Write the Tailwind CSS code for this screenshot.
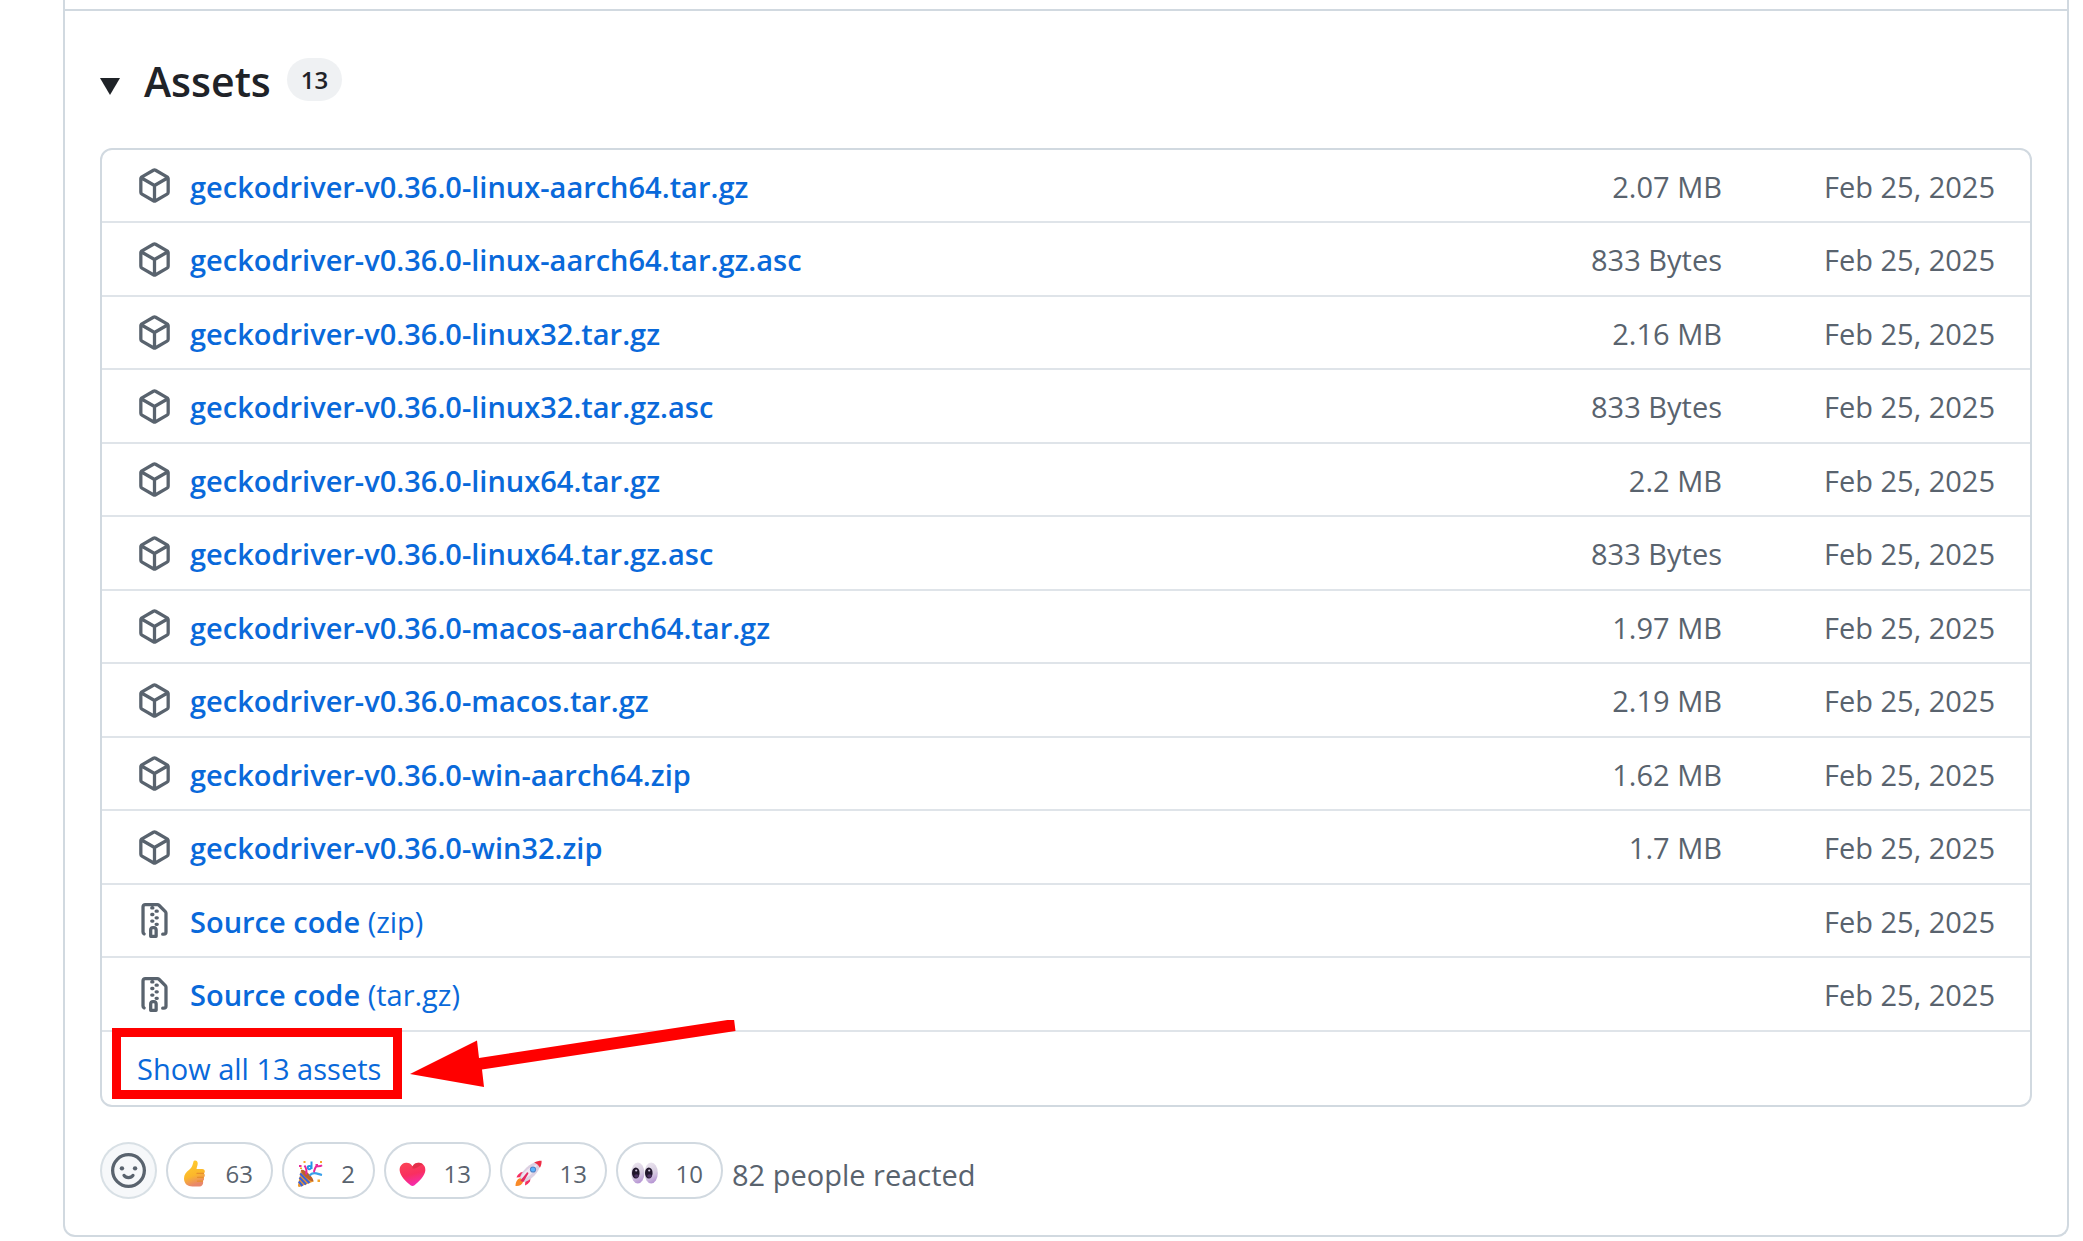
<!DOCTYPE html>
<html lang="en">
  <head>
    <meta charset="UTF-8" />
    <meta name="viewport" content="width=device-width, initial-scale=1.0" />
    <script src="https://cdn.jsdelivr.net/npm/@tailwindcss/browser@4"></script>
    <title>Release v0.36.0 assets</title>
  </head>
  <body class="bg-white font-['Segoe_UI','Open_Sans',sans-serif] text-[#1f2328]">
    <!-- icon sprite -->
    <svg class="hidden" xmlns="http://www.w3.org/2000/svg">
      <symbol id="icon-package" viewBox="0 0 16 16">
        <path d="m8.878.392 5.25 3.045c.54.314.872.89.872 1.514v6.098a1.75 1.75 0 0 1-.872 1.514l-5.25 3.045a1.75 1.75 0 0 1-1.756 0l-5.25-3.045A1.75 1.75 0 0 1 1 11.049V4.951c0-.624.332-1.201.872-1.514L7.122.392a1.75 1.75 0 0 1 1.756 0ZM7.875 1.69l-4.63 2.685L8 7.133l4.755-2.758-4.63-2.685a.248.248 0 0 0-.25 0ZM2.5 5.677v5.372c0 .09.047.171.125.216l4.625 2.683V8.432Zm6.25 8.271 4.625-2.683a.25.25 0 0 0 .125-.216V5.677L8.75 8.432Z" />
      </symbol>
      <symbol id="icon-zip" viewBox="0 0 16 16">
        <path d="M3.5 1.75v11.5c0 .09.048.173.126.217a.75.75 0 0 1-.752 1.298A1.748 1.748 0 0 1 2 13.25V1.75C2 .784 2.784 0 3.75 0h5.586c.464 0 .909.185 1.237.513l2.914 2.914c.329.328.513.773.513 1.237v8.586A1.75 1.75 0 0 1 12.25 15h-.5a.75.75 0 0 1 0-1.5h.5a.25.25 0 0 0 .25-.25V4.664a.25.25 0 0 0-.073-.177L9.513 1.573a.25.25 0 0 0-.177-.073H7.25a.75.75 0 0 1 0 1.5h-.5a.75.75 0 0 1 0-1.5h-3a.25.25 0 0 0-.25.25Zm3.75 8.75h.5c.966 0 1.75.784 1.75 1.75v3a.75.75 0 0 1-.75.75h-2.5a.75.75 0 0 1-.75-.75v-3c0-.966.784-1.75 1.75-1.75ZM6 5.25a.75.75 0 0 1 .75-.75h.5a.75.75 0 0 1 0 1.5h-.5A.75.75 0 0 1 6 5.25Zm.75 2.25h.5a.75.75 0 0 1 0 1.5h-.5a.75.75 0 0 1 0-1.5Zm1.25-.75A.75.75 0 0 1 8.75 6h.5a.75.75 0 0 1 0 1.5h-.5A.75.75 0 0 1 8 6.75ZM8.75 3h.5a.75.75 0 0 1 0 1.5h-.5a.75.75 0 0 1 0-1.5ZM8 9.75A.75.75 0 0 1 8.75 9h.5a.75.75 0 0 1 0 1.5h-.5A.75.75 0 0 1 8 9.75Zm-1 2.5v2.25h1v-2.25a.25.25 0 0 0-.25-.25h-.5a.25.25 0 0 0-.25.25Z" />
      </symbol>
    </svg>

    <main class="ml-[63px] mr-[14px] rounded-b-xl border-2 border-t-0 border-[#d1d9e0] pt-[9px]">
      <section class="border-t-2 border-[#d1d9e0] px-[35px] pt-[37px] pb-9">
        <details open>
          <summary class="flex cursor-pointer list-none items-center">
            <svg class="mt-2.5 mr-6 h-[17px] w-5" viewBox="0 0 20 17" fill="#1f2328"><path d="M0 0h20L10 17z" /></svg>
            <h3 class="text-[41px] leading-[66px] font-semibold">Assets</h3>
            <span class="mb-1 ml-4 rounded-full bg-[#eff1f3] px-3.5 text-2xl leading-[43px] font-semibold">13</span>
          </summary>

          <div class="mt-[34px] rounded-xl border-2 border-[#d1d9e0] text-[29px] leading-10">
            <table class="w-full border-separate border-spacing-0" aria-label="Assets">
              <tbody id="assets"></tbody>
            </table>
            <div class="relative flex h-[73px] items-center pl-[35px]">
              <button type="button" class="cursor-pointer text-[#0969da]">Show all 13 assets</button>
              <!-- callout around the button -->
              <div class="pointer-events-none absolute -top-1 left-2.5 h-[71px] w-[290px] border-9 border-[#f00]"></div>
              <svg class="pointer-events-none absolute -top-3 left-[308px] h-[70px] w-[326px]" viewBox="0 0 326 70" fill="#f00">
                <path d="M0 54 67 20.500 69 38 324 -1 325.500 11 72 49.500 74 67z" />
              </svg>
            </div>
          </div>
        </details>

        <div class="mt-[35px] flex items-center gap-[9px] text-[#59636e]">
          <button type="button" aria-label="Add your reaction" class="flex size-[57px] items-center justify-center rounded-full border-2 border-[#d1d9e0]/80 bg-[#f6f8fa]">
            <svg class="size-[35px]" viewBox="0 0 16 16" fill="#59636e">
              <path d="M8 0a8 8 0 1 1 0 16A8 8 0 0 1 8 0ZM1.5 8a6.500 6.500 0 1 0 13 0 6.500 6.500 0 0 0-13 0Z" />
              <circle cx="5" cy="7" r="1" />
              <circle cx="11" cy="7" r="1" />
              <path d="M5.950 10.250Q6.600 11.250 8 11.250T10.050 10.250" fill="none" stroke="#59636e" stroke-width="1.500" stroke-linecap="round" />
            </svg>
          </button>

          <button type="button" class="flex h-[57px] w-[107px] items-center justify-between rounded-full border-2 border-[#d1d9e0] pt-1.5 pr-[18px] pl-[13px] text-2xl">
            <svg class="size-[27px]" viewBox="0 0 27 27">
              <defs>
                <linearGradient id="thumb" x1="0" y1="0" x2="0.300" y2="1">
                  <stop offset="0" stop-color="#ffcf2e" /><stop offset="0.650" stop-color="#fbb72b" /><stop offset="1" stop-color="#e8876b" />
                </linearGradient>
              </defs>
              <path d="M12.500 1.500C13 0 16.500-.2 16.700 3c.1 2.500-1 4.300-1.200 6h5.800c2.600 0 3.300 3 1.600 4.200 1.400 1.200 1.100 3.200-.2 4 .8 1.400.3 3-.8 3.700.9 2.800-.6 5.600-3.400 5.600h-7C6.500 26.500 3 23.500 3 18.500c0-4 2.200-6.500 5.200-8.700 3-2.300 3.500-5 4.300-8.300z" fill="url(#thumb)" />
              <path d="M16 13.400h6.500M16.500 17.400h5.800M16.500 21.200h5" stroke="#e8902b" stroke-width="1.200" stroke-linecap="round" />
            </svg>
            <span>63</span>
          </button>

          <button type="button" class="flex h-[57px] w-[93px] items-center justify-between rounded-full border-2 border-[#d1d9e0] pt-1.5 pr-[18px] pl-[13px] text-2xl">
            <svg class="size-[27px]" viewBox="0 0 27 27" fill="none">
              <path d="M4 10C7 9 16 17 16.500 21.500L2.500 27C1 27 .8 26 1 25z" fill="#f09a2c" />
              <path d="M3.200 13.500 12.500 23M2.500 17.500 9 24.500M1.800 21.500 5.500 26" stroke="#3d62d8" stroke-width="2.200" />
              <path d="M4 10c3-1.500 12.500 7 12.500 11.500C12 21 4.500 14.500 4 10z" fill="#b9612d" />
              <path d="M14.500 1.500v7.500M14.500 7C12 5 10 6.500 11 8.500c1 1.700 3 .5 3.500-1.500" stroke="#2495e8" stroke-width="2" />
              <path d="M12.500 15.500c4-4.500 8-1.500 12.500-.5" stroke="#3aa0ea" stroke-width="2.200" />
              <path d="M9 14.500C10 11.500 9.500 8.500 7.500 5.500M16.500 12c2-1.500.5-5.500 4-5.700 2-.1 3 .2 4.500-1" stroke="#e8279b" stroke-width="2" />
              <path d="M2 5h2.500v2H2zM18.500 4H21v2.500h-2.500z" fill="#e8279b" />
              <path d="M6.500 1h2v2h-2zM23 1h2v2h-2zM20.500 19.500H23V22h-2.500zM3 7.500h2v1.500H3z" fill="#f5a52b" />
            </svg>
            <span>2</span>
          </button>

          <button type="button" class="flex h-[57px] w-[107px] items-center justify-between rounded-full border-2 border-[#d1d9e0] pt-1.5 pr-[18px] pl-[13px] text-2xl">
            <svg class="size-[27px]" viewBox="0 0 27 27">
              <defs>
                <linearGradient id="heart" x1="0.300" y1="0" x2="0.600" y2="1">
                  <stop offset="0" stop-color="#fb4356" /><stop offset="0.500" stop-color="#f92f60" /><stop offset="1" stop-color="#f52bb5" />
                </linearGradient>
              </defs>
              <path d="M13.500 6.300C15 3.500 17.500 2.500 20 2.700c4.500.4 6.700 4 6.300 8-.6 5.500-6.500 11-10.800 14.500-1.300 1-2.700 1-4 0C7 21.700 1.300 16.200.7 10.700.300 6.700 2.500 3.100 7 2.700c2.500-.2 5 .8 6.500 3.600z" fill="url(#heart)" />
              <path d="M13.500 6.500C15 3.500 17.500 2.600 20 2.800c1.800.2 3 .7 4 1.700-3 .5-6.500 4.500-10.500 4z" fill="#d4283f" fill-opacity="0.600" />
            </svg>
            <span>13</span>
          </button>

          <button type="button" class="flex h-[57px] w-[107px] items-center justify-between rounded-full border-2 border-[#d1d9e0] pt-1.5 pr-[18px] pl-[13px] text-2xl">
            <svg class="size-[27px]" viewBox="0 0 27 27">
              <path d="M5.500 18C2 19 .5 22 .5 26c3.500.5 6.500-1 7.800-4.500z" fill="#f98a28" />
              <path d="M9 11.500 5.500 12.500C3.500 14 2.200 15.500 1.500 17.500l6-.5zM15.500 18l-.5 3.500c-1.500 2-3 3.300-5 4l.5-6.500z" fill="#f52f62" />
              <path d="M25.500 1.200C18 1.200 9 7 4.800 17.500l4.700 4.700C20 18 26 9 25.500 1.200z" fill="#dcd0e2" />
              <path d="M22 4.500C15 6.500 9 11.500 6 17l2.500 2.500C15.500 16 20 11 22 4.500z" fill="#eee7f1" />
              <path d="M19.200 2.400C21.500 1.200 24 .7 26.600.7c.1 2.600-.5 5-1.700 7.100-1.300-2.700-3-4.400-5.700-5.400z" fill="#ee2d45" />
              <path d="M12.500 13.200 6.500 20.500l1.500.5z" fill="#e52961" stroke="#e52961" stroke-width="1.800" stroke-linejoin="round" />
              <circle cx="18" cy="9.500" r="3.100" fill="#4d82c6" />
              <circle cx="18" cy="9.500" r="2.100" fill="#5ab4ff" />
            </svg>
            <span>13</span>
          </button>

          <button type="button" class="flex h-[57px] w-[107px] items-center justify-between rounded-full border-2 border-[#d1d9e0] pt-1.5 pr-[18px] pl-[13px] text-2xl">
            <svg class="size-[27px]" viewBox="0 0 27 27">
              <defs>
                <linearGradient id="eye" x1="0.200" y1="0" x2="0.500" y2="1">
                  <stop offset="0" stop-color="#ebe5ef" /><stop offset="0.600" stop-color="#d6cbe0" /><stop offset="1" stop-color="#b796d4" />
                </linearGradient>
              </defs>
              <ellipse cx="6.800" cy="13" rx="6.600" ry="10.500" fill="url(#eye)" />
              <ellipse cx="20.200" cy="13" rx="6.600" ry="10.500" fill="url(#eye)" />
              <ellipse cx="4.800" cy="13" rx="3.800" ry="5.500" fill="#21172c" />
              <ellipse cx="17.800" cy="13" rx="3.800" ry="5.500" fill="#21172c" />
              <ellipse cx="5.500" cy="16" rx="2.300" ry="1.800" fill="#4b3162" />
              <ellipse cx="18.500" cy="16" rx="2.300" ry="1.800" fill="#4b3162" />
              <circle cx="5.200" cy="10.500" r="1.100" fill="#cfc6dc" />
              <circle cx="18.200" cy="10.500" r="1.100" fill="#cfc6dc" />
            </svg>
            <span>10</span>
          </button>

          <span class="pt-2 text-[29px] leading-10">82 people reacted</span>
        </div>
      </section>
    </main>

    <script>
      const RELEASE_DATE = 'Feb 25, 2025'
      const assets = [
        { name: 'geckodriver-v0.36.0-linux-aarch64.tar.gz', size: '2.07 MB' },
        { name: 'geckodriver-v0.36.0-linux-aarch64.tar.gz.asc', size: '833 Bytes' },
        { name: 'geckodriver-v0.36.0-linux32.tar.gz', size: '2.16 MB' },
        { name: 'geckodriver-v0.36.0-linux32.tar.gz.asc', size: '833 Bytes' },
        { name: 'geckodriver-v0.36.0-linux64.tar.gz', size: '2.2 MB' },
        { name: 'geckodriver-v0.36.0-linux64.tar.gz.asc', size: '833 Bytes' },
        { name: 'geckodriver-v0.36.0-macos-aarch64.tar.gz', size: '1.97 MB' },
        { name: 'geckodriver-v0.36.0-macos.tar.gz', size: '2.19 MB' },
        { name: 'geckodriver-v0.36.0-win-aarch64.zip', size: '1.62 MB' },
        { name: 'geckodriver-v0.36.0-win32.zip', size: '1.7 MB' },
        { name: 'Source code', type: '(zip)', size: '' },
        { name: 'Source code', type: '(tar.gz)', size: '' },
      ]

      document.querySelector('#assets').innerHTML = assets
        .map(
          ({ name, type, size }) => `
            <tr class="h-[73px] even:h-[74px]">
              <td class="border-b-2 border-[#d1d9e0]/70 pl-[35px]">
                <div class="flex items-center gap-[18px]">
                  <svg class="size-[35px]" fill="#59636e"><use href="${type ? '#icon-zip' : '#icon-package'}" /></svg>
                  <a href="#" class="pt-0.5 text-[#0969da]"><span class="font-semibold">${name}</span>${type ? ' ' + type : ''}</a>
                </div>
              </td>
              <td class="border-b-2 border-[#d1d9e0]/70 pt-0.5 text-right text-[#59636e]">${size}</td>
              <td class="w-[308px] border-b-2 border-[#d1d9e0]/70 pt-0.5 pr-[35px] text-right text-[#59636e]">${RELEASE_DATE}</td>
            </tr>`
        )
        .join('')
    </script>
  </body>
</html>
